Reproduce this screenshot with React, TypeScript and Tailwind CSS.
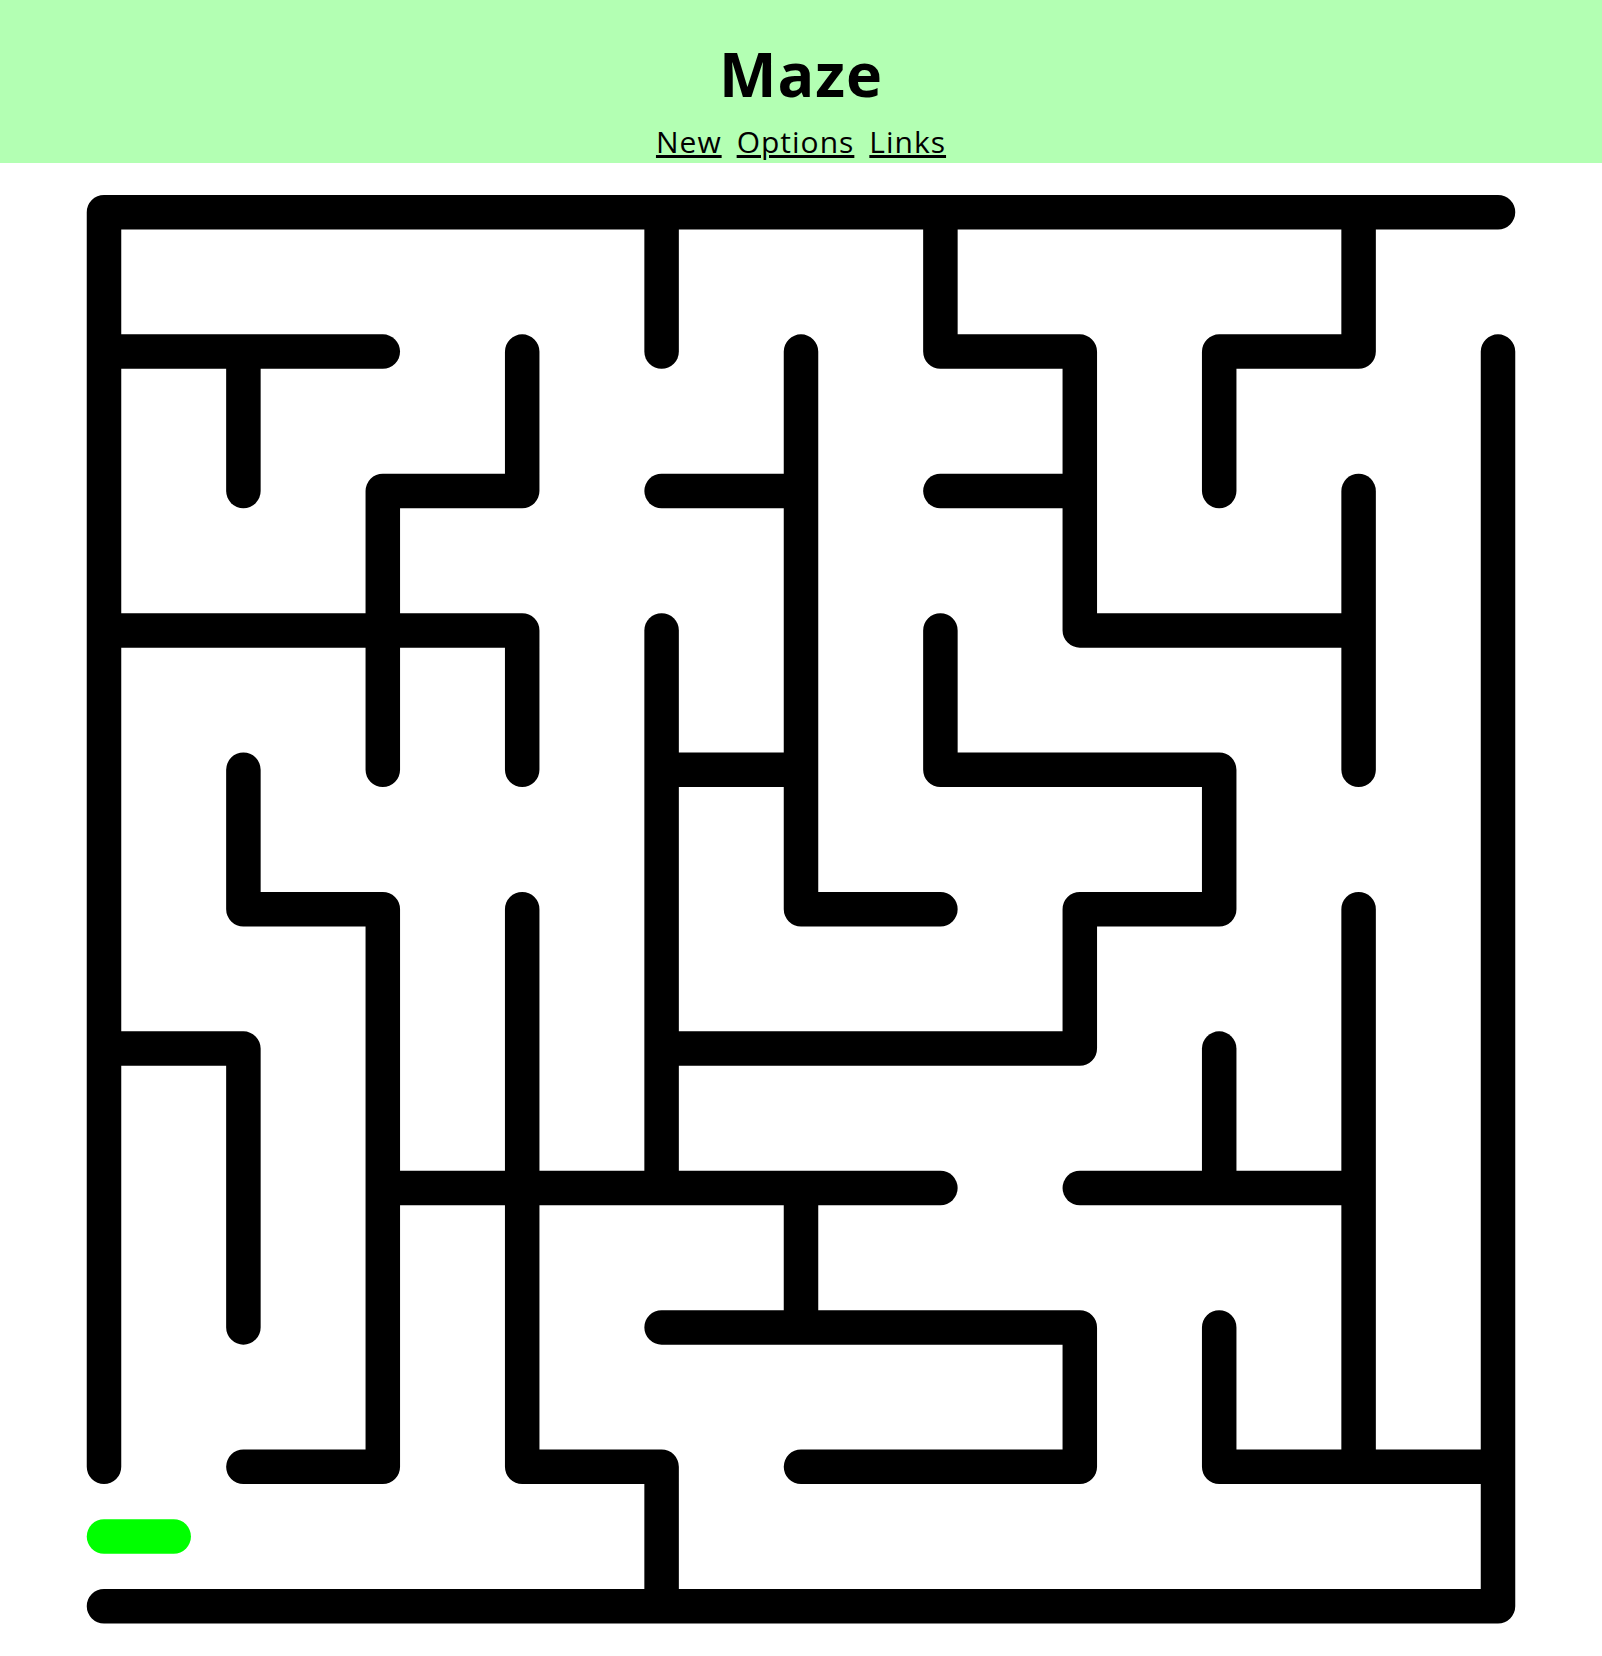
import React from "react";

const CELL = 139.4;
const X0 = 104;
const Y0 = 49.2;

const walls: number[][][] = [
  [[0, 9], [0, 0], [10, 0]],
  [[0, 10], [10, 10], [10, 1]],
  [[4, 0], [4, 1]],
  [[6, 0], [6, 1], [7, 1], [7, 3], [9, 3]],
  [[9, 0], [9, 1], [8, 1], [8, 2]],
  [[0, 1], [2, 1]],
  [[1, 1], [1, 2]],
  [[3, 1], [3, 2], [2, 2], [2, 4]],
  [[0, 3], [3, 3], [3, 4]],
  [[5, 1], [5, 5], [6, 5]],
  [[4, 2], [5, 2]],
  [[6, 2], [7, 2]],
  [[9, 2], [9, 4]],
  [[4, 3], [4, 7]],
  [[4, 4], [5, 4]],
  [[6, 3], [6, 4], [8, 4], [8, 5], [7, 5], [7, 6], [4, 6]],
  [[1, 4], [1, 5], [2, 5], [2, 9], [1, 9]],
  [[3, 5], [3, 9], [4, 9], [4, 10]],
  [[0, 6], [1, 6], [1, 8]],
  [[2, 7], [6, 7]],
  [[5, 7], [5, 8]],
  [[4, 8], [7, 8], [7, 9], [5, 9]],
  [[9, 5], [9, 9]],
  [[8, 6], [8, 7]],
  [[7, 7], [9, 7]],
  [[8, 8], [8, 9], [10, 9]],
];

const onSeg = (p: number[], a: number[], b: number[]) => {
  if (a[0] === b[0] && p[0] === a[0]) {
    return p[1] >= Math.min(a[1], b[1]) && p[1] <= Math.max(a[1], b[1]);
  }
  if (a[1] === b[1] && p[1] === a[1]) {
    return p[0] >= Math.min(a[0], b[0]) && p[0] <= Math.max(a[0], b[0]);
  }
  return false;
};

const isT = (p: number[], self: number) =>
  walls.some((w, k) => {
    if (k === self) return false;
    for (let i = 0; i < w.length - 1; i++) if (onSeg(p, w[i], w[i + 1])) return true;
    return false;
  });

const px = (p: number[]) => [X0 + p[0] * CELL, Y0 + p[1] * CELL];

const pull = (p: number[], q: number[]) => {
  const dx = Math.sign(q[0] - p[0]);
  const dy = Math.sign(q[1] - p[1]);
  const a = px(p);
  return [a[0] + dx * 2, a[1] + dy * 2];
};

const wallD = (pts: number[][], idx: number) => {
  const coords = pts.map((p) => px(p));
  const n = pts.length;
  if (isT(pts[0], idx)) coords[0] = pull(pts[0], pts[1]);
  if (isT(pts[n - 1], idx)) coords[n - 1] = pull(pts[n - 1], pts[n - 2]);
  return coords.map((c, i) => `${i === 0 ? "M" : "L"}${c[0].toFixed(1)} ${c[1].toFixed(1)}`).join(" ");
};

export default function App() {
  return (
    <div className="w-[1602px] bg-white" style={{ fontFamily: '"Open Sans", "Noto Sans", sans-serif' }}>
      <header className="h-[163px] bg-[#b3ffb3] flex flex-col items-center text-black">
        <h1 className="mt-[43px] text-[61px] leading-[61px] font-bold tracking-[1px]">Maze</h1>
        <nav className="mt-[23px] flex gap-[15px] text-[30px] leading-[30px] tracking-[1px]">
          <a href="#" className="underline text-black">New</a>
          <a href="#" className="underline text-black">Options</a>
          <a href="#" className="underline text-black">Links</a>
        </nav>
      </header>
      <svg width="1602" height="1493" className="block">
        <g fill="none" stroke="#000" strokeWidth="34.5" strokeLinecap="round" strokeLinejoin="round">
          {walls.map((w, i) => (
            <path key={i} d={wallD(w, i)} />
          ))}
        </g>
        <path
          d={`M${X0} ${(Y0 + 9.5 * CELL).toFixed(1)} L${(X0 + 0.5 * CELL).toFixed(1)} ${(Y0 + 9.5 * CELL).toFixed(1)}`}
          fill="none"
          stroke="#00ff00"
          strokeWidth="34.5"
          strokeLinecap="round"
        />
      </svg>
    </div>
  );
}
